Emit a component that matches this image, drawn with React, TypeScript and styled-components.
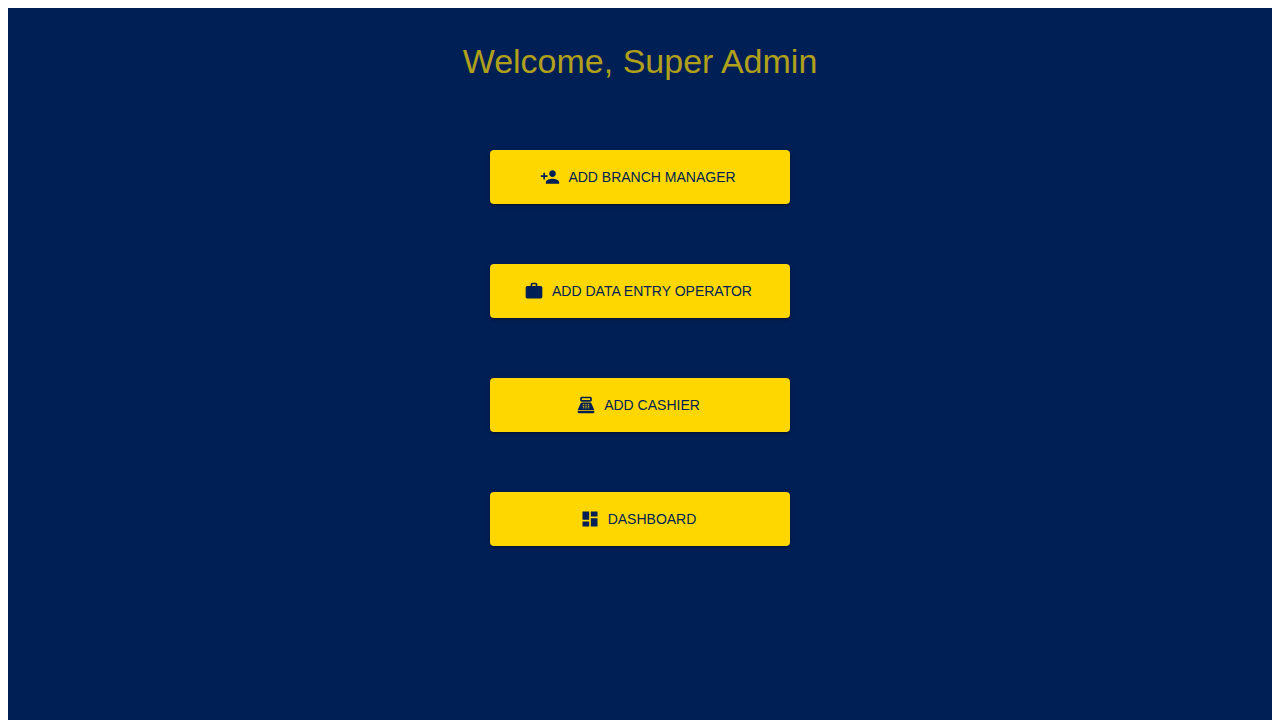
import React from "react";
import styled, { createGlobalStyle } from "styled-components";
import { MdPersonAdd, MdWork, MdPointOfSale, MdDashboard } from "react-icons/md";
import type { IconType } from "react-icons";

const GlobalStyle = createGlobalStyle`
  body {
    margin: 8px 8px 0;
    background: #ffffff;
    font-family: "Liberation Sans", Arial, sans-serif;
  }
`;

const Page = styled.main`
  box-sizing: border-box;
  min-height: calc(100vh - 8px);
  padding: 32px 24px;
  display: flex;
  flex-direction: column;
  align-items: center;
  background: #001f54;
`;

const Title = styled.h1`
  margin: 0 0 68px;
  color: #b0a01c;
  font-size: 34px;
  font-weight: 400;
  line-height: 42px;
  letter-spacing: 0;
  text-align: center;
`;

const Actions = styled.nav`
  width: 100%;
  max-width: 300px;
  display: flex;
  flex-direction: column;
  gap: 60px;
`;

const ActionButton = styled.button`
  display: flex;
  align-items: center;
  justify-content: center;
  gap: 8px;
  width: 100%;
  padding: 15px 16px;
  border: 0;
  border-radius: 4px;
  background: #ffd700;
  color: #001f54;
  font-family: inherit;
  font-size: 14px;
  font-weight: 400;
  line-height: 24px;
  text-transform: uppercase;
  cursor: pointer;
  box-shadow: 0 3px 1px -2px rgba(0, 0, 0, 0.2), 0 2px 2px 0 rgba(0, 0, 0, 0.14),
    0 1px 5px 0 rgba(0, 0, 0, 0.12);

  svg {
    width: 20px;
    height: 20px;
    margin-left: -4px;
  }
`;

const actions: { label: string; Icon: IconType }[] = [
  { label: "Add Branch Manager", Icon: MdPersonAdd },
  { label: "Add Data Entry Operator", Icon: MdWork },
  { label: "Add Cashier", Icon: MdPointOfSale },
  { label: "Dashboard", Icon: MdDashboard },
];

export default function App() {
  return (
    <>
      <GlobalStyle />
      <Page>
        <Title>Welcome, Super Admin</Title>
        <Actions>
          {actions.map(({ label, Icon }) => (
            <ActionButton key={label} type="button">
              <Icon aria-hidden="true" />
              {label}
            </ActionButton>
          ))}
        </Actions>
      </Page>
    </>
  );
}
